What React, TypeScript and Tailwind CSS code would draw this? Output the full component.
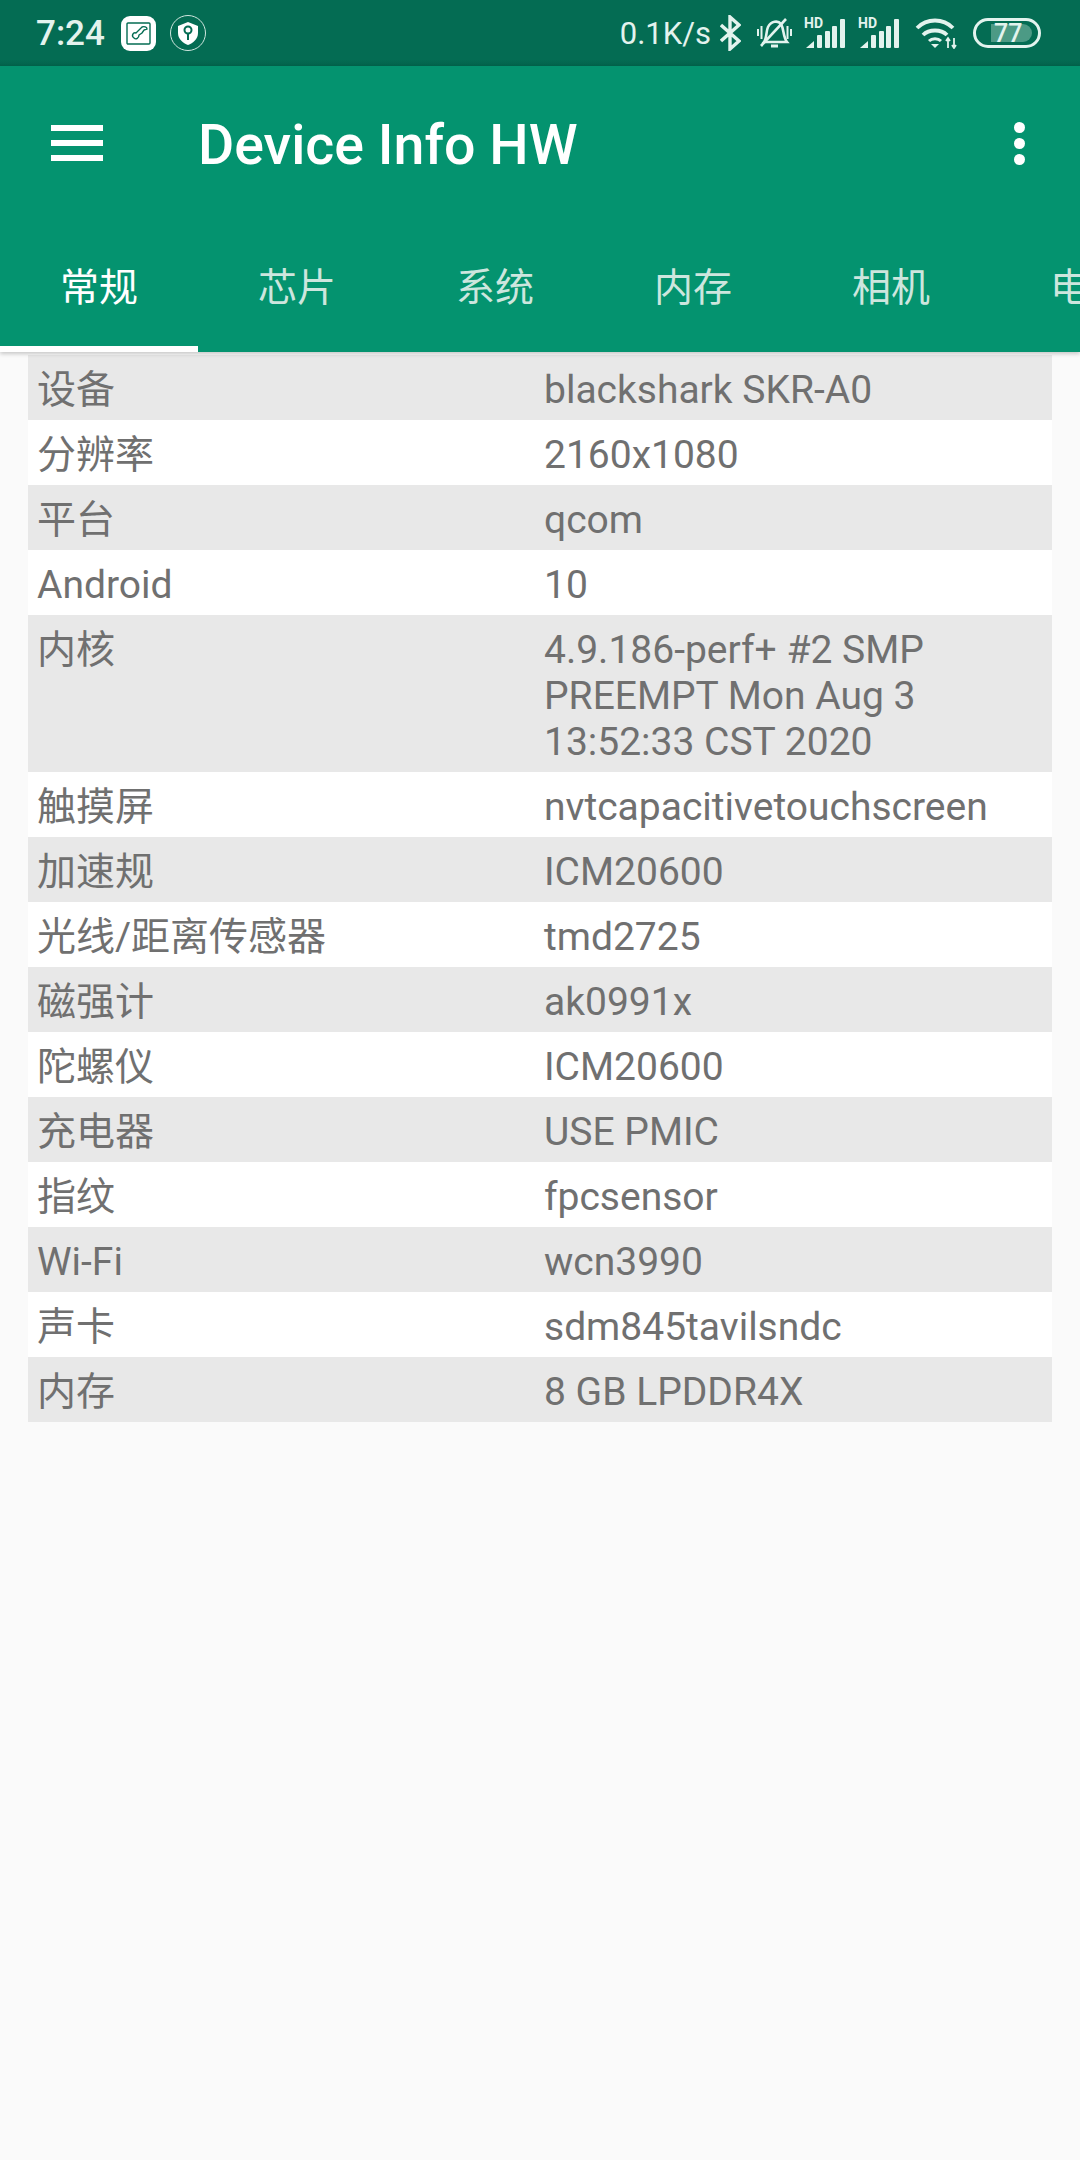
const ROWS = [
  ['设备', 'blackshark SKR-A0'],
  ['分辨率', '2160x1080'],
  ['平台', 'qcom'],
  ['Android', '10'],
  ['内核', '4.9.186-perf+ #2 SMP PREEMPT Mon Aug 3 13:52:33 CST 2020'],
  ['触摸屏', 'nvtcapacitivetouchscreen'],
  ['加速规', 'ICM20600'],
  ['光线/距离传感器', 'tmd2725'],
  ['磁强计', 'ak0991x'],
  ['陀螺仪', 'ICM20600'],
  ['充电器', 'USE PMIC'],
  ['指纹', 'fpcsensor'],
  ['Wi-Fi', 'wcn3990'],
  ['声卡', 'sdm845tavilsndc'],
  ['内存', '8 GB LPDDR4X'],
];

const TABS = ['常规', '芯片', '系统', '内存', '相机', '电池'];

function SignalIcon() {
  return (
    <svg width="41" height="30" viewBox="0 0 41 30" className="fill-[#e3f3ee] overflow-visible">
      <text x="0" y="10" fontSize="14" fontWeight="700" fontFamily="Roboto, sans-serif">HD</text>
      <path d="M2 30 L10 23 V30 Z" />
      <rect x="13" y="17" width="5" height="13" rx="1" />
      <rect x="21" y="13" width="5" height="17" rx="1" />
      <rect x="28" y="8" width="5" height="22" rx="1" />
      <rect x="36" y="1" width="5" height="29" rx="1" />
    </svg>
  );
}

function StatusBar() {
  return (
    <div className="h-[66px] bg-linear-to-b from-[#046c53] from-90% to-[#03624b] flex items-center justify-between pl-9 pr-[39px] text-[#e3f3ee] font-['Roboto',sans-serif]">
      <div className="flex items-center">
        <span className="text-[35px] font-medium leading-none">7:24</span>
        <div className="ml-4 w-[35px] h-[35px] rounded-[9px] bg-white flex items-center justify-center">
          <svg width="27" height="27" viewBox="0 0 27 27" fill="none" stroke="#046c53" strokeWidth="1.4">
            <rect x="2" y="3" width="23" height="21" rx="1" />
            <path d="M9 18 C6 16 8 12 11 13 L17 7 C19 6 22 7 22 9 L19 10 L17 13 L14 15 C14 18 11 20 9 18 Z" />
          </svg>
        </div>
        <div className="ml-[14px] w-9 h-9 rounded-full border border-[#cfe6de] flex items-center justify-center">
          <svg width="24" height="26" viewBox="0 0 24 26">
            <path d="M12 2 L22 6 V13 C22 19 17 23 12 25 C7 23 2 19 2 13 V6 Z" fill="white" />
            <circle cx="12" cy="10" r="3.5" fill="none" stroke="#046c53" strokeWidth="2" />
            <rect x="11" y="13" width="2" height="7" fill="#046c53" />
          </svg>
        </div>
      </div>
      <div className="flex items-center">
        <span className="text-[31px] leading-none">0.1K/s</span>
        <svg width="21" height="36" viewBox="0 0 21 36" fill="none" stroke="#e3f3ee" strokeWidth="3.4" className="ml-[9px]">
          <path d="M1 10 L19 26 L10 34 V2 L19 10 L1 26" />
        </svg>
        <svg width="35" height="32" viewBox="0 0 35 32" fill="none" stroke="#e3f3ee" strokeWidth="2.6" className="ml-4">
          <path d="M7 25 C10 21 9 14 11 10 C14 4 21 3 24 7 C27 12 26 20 30 25 Z" />
          <path d="M14 29 H21" strokeWidth="3" />
          <path d="M1 12 V19 M4.5 9 V22 M34 12 V19 M30.5 9 V22" strokeWidth="2" />
          <path d="M4 29 L29 2" />
        </svg>
        <div className="ml-3"><SignalIcon /></div>
        <div className="ml-[13px]"><SignalIcon /></div>
        <svg width="42" height="32" viewBox="0 0 42 32" fill="none" stroke="#e3f3ee" strokeWidth="3.8" className="ml-4">
          <path d="M2 11 C12 1 28 1 38 11" />
          <path d="M8 18 C14 12 26 12 32 18" />
          <path d="M14 24 C17 21 23 21 26 24" strokeWidth="3" />
          <path d="M20 31 L16 27 H24 Z" fill="#e3f3ee" stroke="none" />
          <path d="M33 31 V21 M39 21 V31 M31 24 L33 21 L35 24 M37 28 L39 31 L41 28" strokeWidth="1.8" />
        </svg>
        <div className="ml-4 w-[68px] h-[30px] rounded-full border-[3px] border-[#e3f3ee] pl-[15px] pr-[5px] flex items-center">
          <div className="h-[18px] w-[41px] rounded-r-full bg-[#4c9a85] pl-[3px] flex items-center text-[25px] font-medium leading-none">
            77
          </div>
        </div>
      </div>
    </div>
  );
}

function Toolbar() {
  return (
    <div className="h-[154px] flex items-center justify-between pl-[51px] pr-[55px]">
      <div className="flex items-center">
        <div className="w-[52px] flex flex-col gap-[9px] -mt-[1px]">
          <div className="h-[6px] bg-white" />
          <div className="h-[6px] bg-white" />
          <div className="h-[6px] bg-white" />
        </div>
        <span className="ml-[95px] text-[55.5px] font-medium text-white leading-none mt-[6px]">Device Info HW</span>
      </div>
      <div className="flex flex-col gap-[5px]">
        <div className="w-[11px] h-[11px] rounded-full bg-white" />
        <div className="w-[11px] h-[11px] rounded-full bg-white" />
        <div className="w-[11px] h-[11px] rounded-full bg-white" />
      </div>
    </div>
  );
}

function Tabs() {
  return (
    <div className="h-[132px] flex overflow-hidden">
      {TABS.map((tab, i) => (
        <div
          key={tab}
          className={`shrink-0 w-[198px] flex items-center justify-center pt-[11px] text-[39px] leading-none border-b-[6px] ${
            i === 0 ? 'border-white text-white' : 'border-transparent text-[#cde6de]'
          }`}
        >
          {tab}
        </div>
      ))}
    </div>
  );
}

export default function App() {
  return (
    <div className="w-[1080px] h-[2160px] bg-[#fafafa] overflow-hidden font-['Roboto','Noto_Sans_CJK_SC',sans-serif]">
      <StatusBar />
      <header className="bg-[#04936f] shadow-[0_2px_4px_rgba(0,0,0,0.2)] relative">
        <Toolbar />
        <Tabs />
      </header>
      <div className="mx-7 mt-[3px] text-[39px] leading-[46px] text-[#707070]">
        {ROWS.map(([label, value], i) => (
          <div key={label} className={`flex pt-[12px] pb-[7px] pl-[9px] ${i % 2 === 0 ? 'bg-[#e8e8e8]' : 'bg-white'}`}>
            <div className="w-[507px] shrink-0">{label}</div>
            <div className="flex-1 pr-[40px]">{value}</div>
          </div>
        ))}
      </div>
    </div>
  );
}
